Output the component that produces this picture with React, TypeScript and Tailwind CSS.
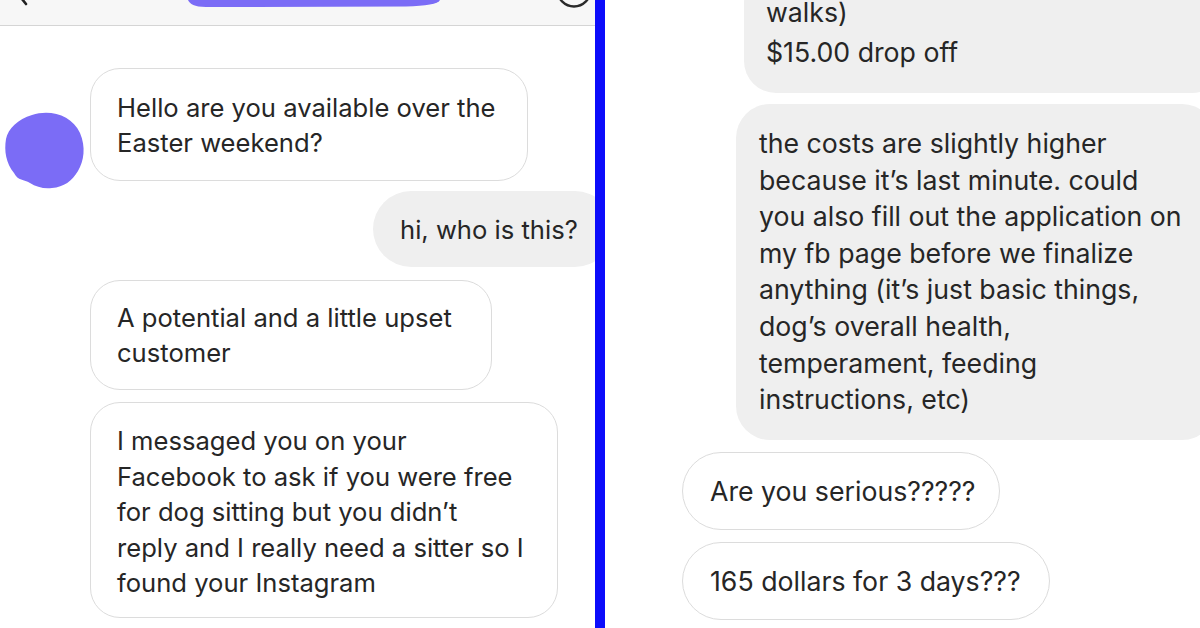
import React from "react";

const font = { fontFamily: "Inter, 'Noto Sans', sans-serif" };

function Lines({ lines }: { lines: string[] }) {
  return (
    <>
      {lines.map((l, i) => (
        <div key={i} className="whitespace-nowrap">
          {l}
        </div>
      ))}
    </>
  );
}

export default function App() {
  return (
    <div
      className="flex w-[1200px] h-[628px] overflow-hidden bg-white text-[#262626]"
      style={font}
    >
      {/* Left panel */}
      <div className="relative flex flex-col w-[595px] h-[628px] overflow-hidden bg-white shrink-0">
        <div className="relative h-[26px] shrink-0 bg-[#f7f7f7] border-b border-[#d5d5d5]">
          <svg className="absolute left-[14px] top-0" width="20" height="8" viewBox="0 0 20 8">
            <path d="M4 -6 L12 4" stroke="#222" strokeWidth="2.6" strokeLinecap="round" fill="none" />
          </svg>
          <svg className="absolute left-[186px] top-0" width="256" height="9" viewBox="0 0 256 9">
            <path d="M2 0 L254 0 C252 4 240 6 220 6.5 L20 7 C8 7 4 4 2 0 Z" fill="#7b6cf6" />
          </svg>
          <svg className="absolute left-[552px] top-0" width="44" height="10" viewBox="0 0 44 10">
            <circle cx="22" cy="-10" r="16.5" stroke="#2a2a2a" strokeWidth="2.4" fill="none" />
          </svg>
        </div>

        <div className="relative flex flex-col items-start pl-[90px] pt-[42px] text-[25.6px] leading-[35px]">
          <svg className="absolute left-[2px] top-[83px]" width="84" height="80" viewBox="0 0 84 80">
            <path
              d="M30 6 C48 0 70 6 78 24 C84 38 82 52 76 62 C70 72 62 78 50 79 C42 80 34 78 28 74 C22 70 16 72 12 64 C4 54 2 42 4 30 C6 20 16 10 30 6 Z"
              fill="#7b6cf6"
            />
          </svg>

          <div className="w-[438px] h-[113px] rounded-[30px] border-[1.5px] border-[#dcdcdc] pl-[26px] pt-[21px]">
            <Lines lines={["Hello are you available over the", "Easter weekend?"]} />
          </div>

          <div className="mt-[10px] ml-[283px] w-[240px] h-[76px] shrink-0 rounded-[38px] bg-[#efefef] pl-[27px] flex items-center">
            <span className="whitespace-nowrap">hi, who is this?</span>
          </div>

          <div className="mt-[13px] w-[402px] h-[110px] rounded-[30px] border-[1.5px] border-[#dcdcdc] pl-[26px] pt-[19px]">
            <Lines lines={["A potential and a little upset", "customer"]} />
          </div>

          <div className="mt-[12px] w-[468px] h-[216px] rounded-[30px] border-[1.5px] border-[#dcdcdc] pl-[26px] pt-[20px] leading-[35.5px]">
            <Lines
              lines={[
                "I messaged you on your",
                "Facebook to ask if you were free",
                "for dog sitting but you didn\u2019t",
                "reply and I really need a sitter so I",
                "found your Instagram",
              ]}
            />
          </div>
        </div>
      </div>

      {/* Divider */}
      <div className="w-[10px] h-[628px] shrink-0 bg-[#0c0cfb]" />

      {/* Right panel */}
      <div className="flex flex-col items-start w-[595px] h-[628px] overflow-hidden bg-white shrink-0 text-[26.7px] leading-[36.6px]">
        <div className="mt-[-29px] ml-[139px] w-[480px] h-[122px] shrink-0 rounded-[32px] bg-[#efefef] pl-[22px] pt-[21px] leading-[40px]">
          <Lines lines={["walks)", "$15.00 drop off"]} />
        </div>

        <div className="mt-[11px] ml-[131px] w-[480px] h-[336px] shrink-0 rounded-[34px] bg-[#efefef] pl-[23px] pt-[21px]">
          <Lines
            lines={[
              "the costs are slightly higher",
              "because it\u2019s last minute. could",
              "you also fill out the application on",
              "my fb page before we finalize",
              "anything (it\u2019s just basic things,",
              "dog\u2019s overall health,",
              "temperament, feeding",
              "instructions, etc)",
            ]}
          />
        </div>

        <div className="mt-[12px] ml-[77px] w-[318px] h-[78px] shrink-0 rounded-[39px] border-[1.5px] border-[#dcdcdc] pl-[27px] flex items-center">
          <span className="whitespace-nowrap">Are you serious?????</span>
        </div>

        <div className="mt-[12px] ml-[77px] w-[368px] h-[78px] shrink-0 rounded-[39px] border-[1.5px] border-[#dcdcdc] pl-[27px] flex items-center">
          <span className="whitespace-nowrap">165 dollars for 3 days???</span>
        </div>
      </div>
    </div>
  );
}
